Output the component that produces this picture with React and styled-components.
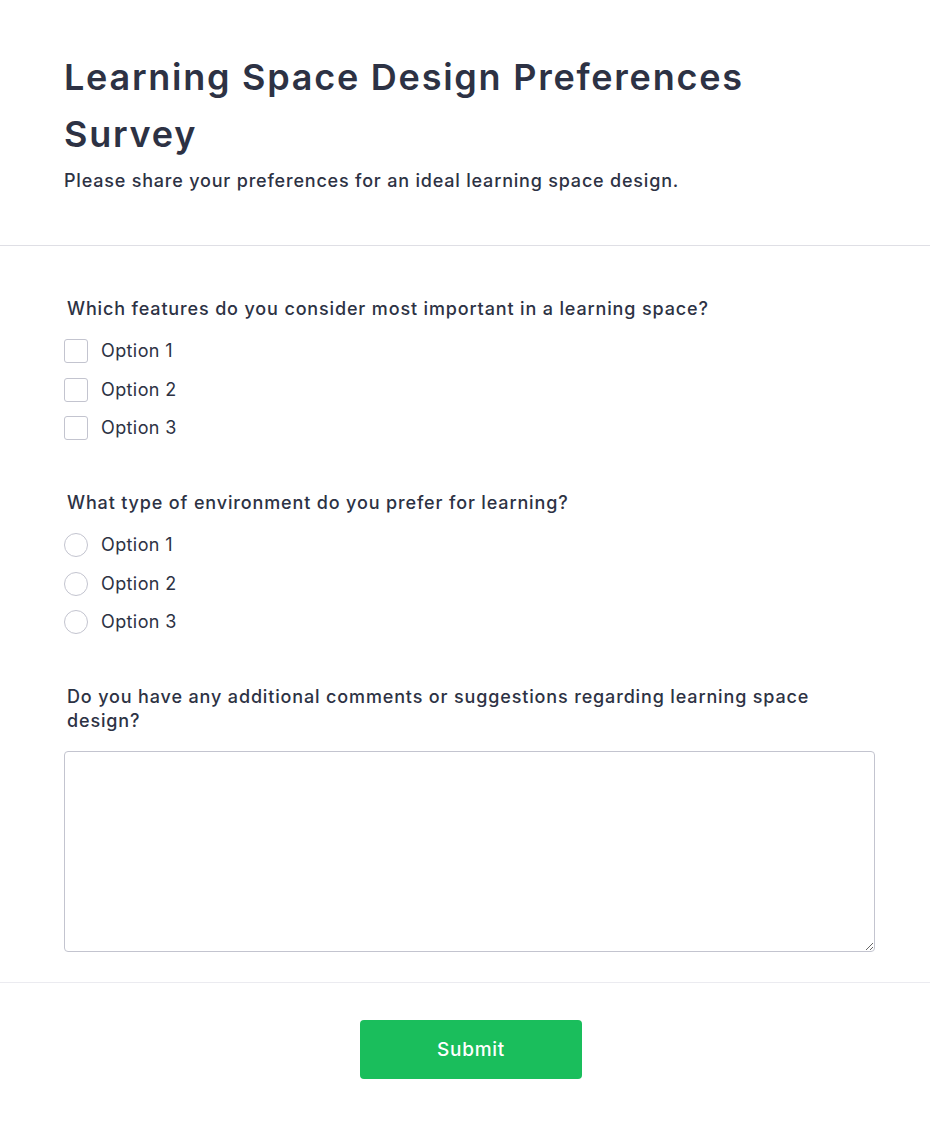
import React from "react";
import styled, { createGlobalStyle } from "styled-components";

const Global = createGlobalStyle`
  html, body { margin: 0; padding: 0; background: #fff; }
  body { font-family: Inter, "Noto Sans", sans-serif; color: #2d3244; }
  * { box-sizing: border-box; }
`;

const Page = styled.div`
  width: 930px;
  background: #fff;
`;

const Header = styled.header`
  padding: 49px 55px 52px 64px;
  border-bottom: 1px solid #dfdfe5;
`;

const Title = styled.h1`
  margin: 0;
  font-size: 36px;
  line-height: 57px;
  font-weight: 600;
  color: #2d3244;
  letter-spacing: 1.75px;
`;

const Subtitle = styled.p`
  margin: 6px 0 0;
  font-size: 18px;
  line-height: 24px;
  font-weight: 500;
  color: #2d3244;
  letter-spacing: 0.8px;
`;

const Body = styled.main`
  padding: 51px 55px 30px 64px;
  border-bottom: 1px solid #ebebf0;
`;

const Fieldset = styled.fieldset`
  border: 0;
  margin: 0 0 51px;
  padding: 0;
  &:last-child { margin-bottom: 0; }
`;

const Legend = styled.div`
  padding-left: 3px;
  font-size: 18px;
  line-height: 24px;
  font-weight: 500;
  color: #2d3244;
  letter-spacing: 0.85px;
  margin-bottom: 18px;
`;

const Options = styled.div`
  display: flex;
  flex-direction: column;
  gap: 14.5px;
`;

const Option = styled.label`
  display: flex;
  align-items: center;
  gap: 13px;
  font-size: 18px;
  line-height: 24px;
  color: #2d3244;
  letter-spacing: 0.4px;
  cursor: pointer;
`;

const Box = styled.span`
  width: 24px;
  height: 24px;
  border: 1px solid #c3c4cf;
  border-radius: ${(p) => (p.$round ? "50%" : "3px")};
  background: #fff;
  flex-shrink: 0;
`;

const TextArea = styled.textarea`
  display: block;
  width: 811px;
  height: 201px;
  margin: 0;
  border: 1px solid #c3c4cf;
  border-radius: 4px;
  font-family: inherit;
  font-size: 16px;
  padding: 8px;
  resize: vertical;
`;

const Footer = styled.footer`
  display: flex;
  justify-content: center;
  padding: 37px 0 50px 12px;
`;

const Button = styled.button`
  width: 222px;
  height: 59px;
  border: 0;
  border-radius: 4px;
  background: #1abe5c;
  color: #fff;
  font-family: inherit;
  font-size: 19px;
  font-weight: 500;
  letter-spacing: 0.7px;
  cursor: pointer;
`;

const Question = ({ title, round }) => (
  <Fieldset>
    <Legend>{title}</Legend>
    <Options>
      {["Option 1", "Option 2", "Option 3"].map((o) => (
        <Option key={o}>
          <Box $round={round} />
          {o}
        </Option>
      ))}
    </Options>
  </Fieldset>
);

export default function App() {
  return (
    <Page>
      <Global />
      <Header>
        <Title>Learning Space Design Preferences Survey</Title>
        <Subtitle>Please share your preferences for an ideal learning space design.</Subtitle>
      </Header>
      <Body>
        <Question title="Which features do you consider most important in a learning space?" />
        <Question title="What type of environment do you prefer for learning?" round />
        <Fieldset>
          <Legend>Do you have any additional comments or suggestions regarding learning space design?</Legend>
          <TextArea />
        </Fieldset>
      </Body>
      <Footer>
        <Button>Submit</Button>
      </Footer>
    </Page>
  );
}
